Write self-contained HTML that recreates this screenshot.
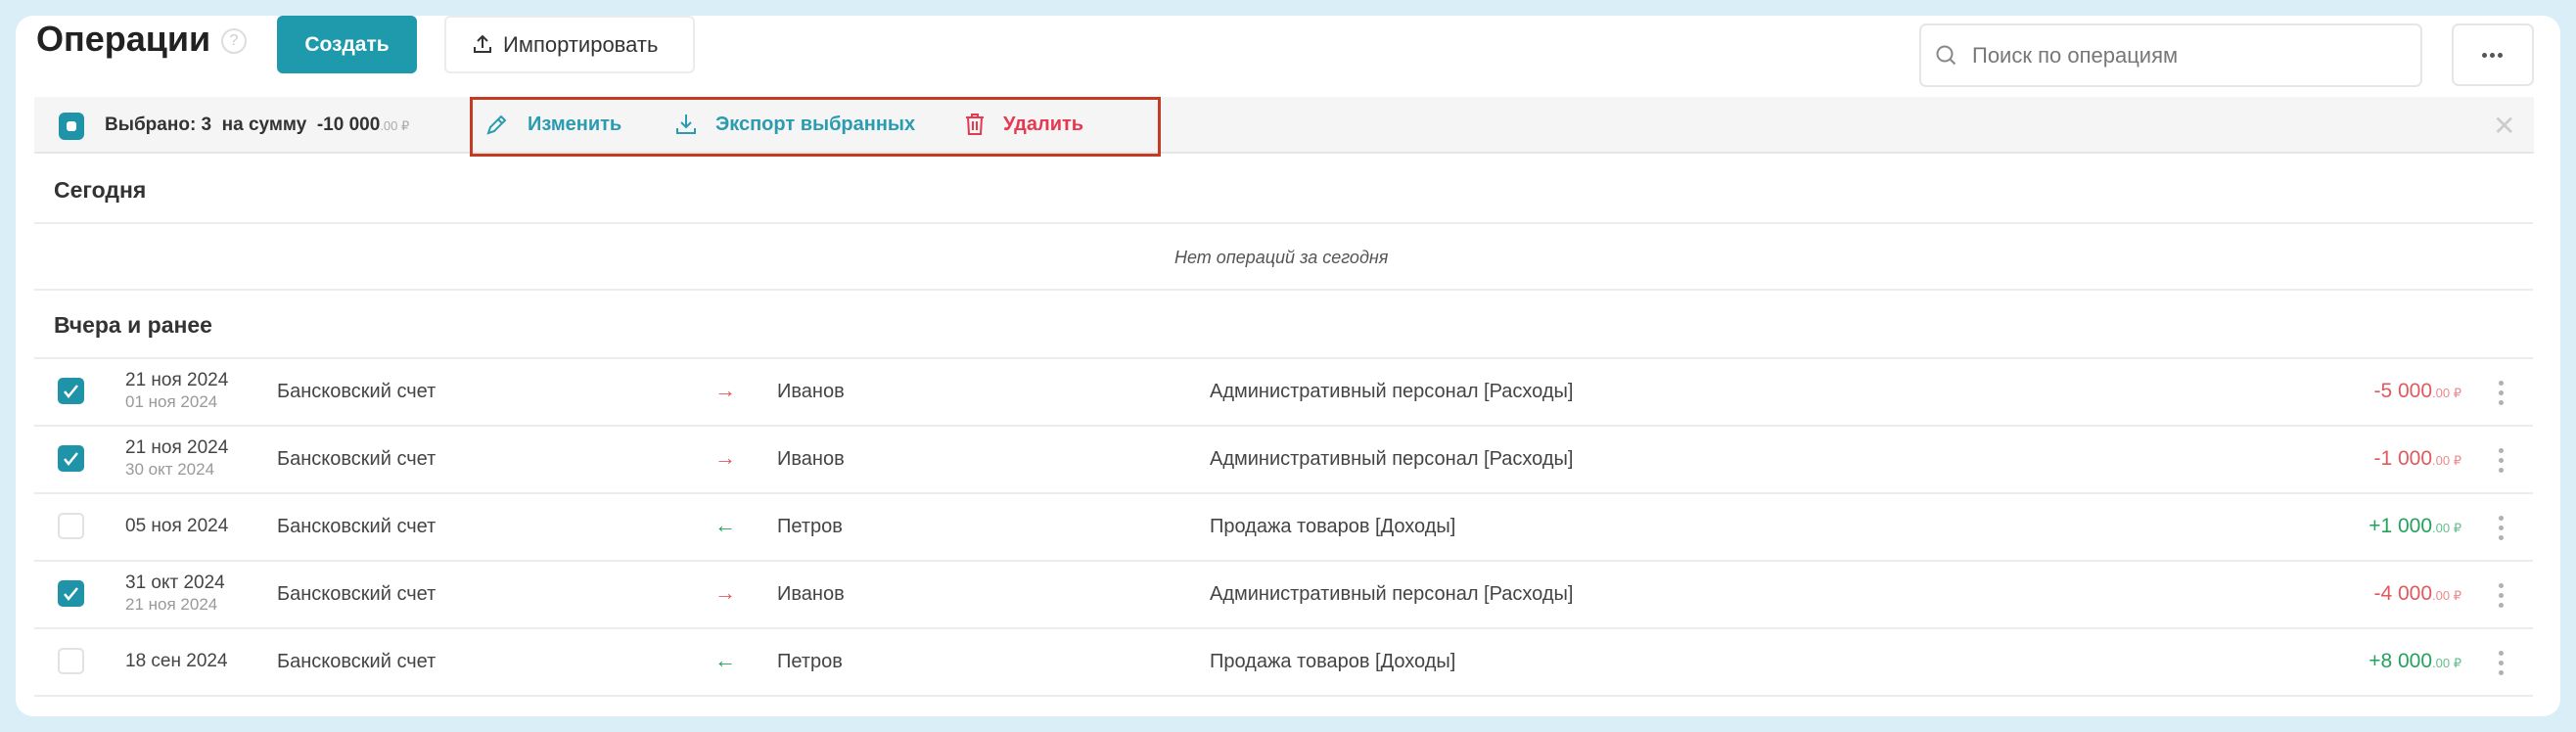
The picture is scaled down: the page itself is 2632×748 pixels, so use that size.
<!DOCTYPE html>
<html><head><meta charset="utf-8"><style>
*{margin:0;padding:0;box-sizing:border-box}
body{width:2632px;height:748px;background:#d9eef6;font-family:"Liberation Sans",sans-serif;position:relative;overflow:hidden;color:#333}
.card{position:absolute;left:16px;top:16px;width:2600px;height:716px;background:#fff;border-radius:18px}
.a{position:absolute;white-space:nowrap}
.line{position:absolute;left:35px;width:2553px;height:2px;background:#ececec}
.cb{position:absolute;left:59px;width:27px;height:27px;border-radius:5px}
.cb.on{background:#1f93a7}
.cb.off{border:2px solid #e2e2e2;background:#fff}
.d1{font-size:19px;color:#444}
.d2{font-size:17px;color:#999}
.t{font-size:20px;color:#444}
.amt{font-size:21px;text-align:right;right:117px}
.amt small{font-size:13px;opacity:.7}
.red{color:#e0595c}.green{color:#23a25e}
.dots{position:absolute;left:2553px;width:6px}
.dots i{display:block;width:5px;height:5px;border-radius:50%;background:#b0b0b0;margin-bottom:5px}
.md{position:absolute;top:54px;width:5px;height:5px;border-radius:50%;background:#555}
</style></head><body>
<div class="card"></div>
<div class="a" style="left:37px;top:19px;font-size:36px;font-weight:bold;color:#222">Операции</div>
<div class="a" style="left:226px;top:29px;width:26px;height:26px;border:2px solid #ddd;border-radius:50%;color:#ccc;font-size:16px;text-align:center;line-height:22px">?</div>
<div class="a" style="left:283px;top:16px;width:143px;height:59px;background:#1f9aad;border-radius:6px;color:#fff;font-weight:bold;font-size:21px;text-align:center;line-height:59px">Создать</div>
<div class="a" style="left:454px;top:16px;width:256px;height:59px;border:2px solid #ececec;border-radius:6px;font-size:22px;line-height:55px;color:#333;padding-left:26px">
<svg width="22" height="22" viewBox="0 0 22 22" style="vertical-align:-3px;margin-right:10px"><path d="M11 15V3M6 8l5-5 5 5M3 14v5h16v-5" fill="none" stroke="#333" stroke-width="2"/></svg>Импортировать</div>
<div class="a" style="left:1961px;top:24px;width:514px;height:65px;border:2px solid #e6e6e6;border-radius:7px"></div>
<svg class="a" style="left:1977px;top:45px" width="24" height="24" viewBox="0 0 24 24"><circle cx="10" cy="10" r="7.5" fill="none" stroke="#888" stroke-width="2"/><path d="M15.5 15.5l5 5" stroke="#888" stroke-width="2"/></svg>
<div class="a" style="left:2015px;top:44px;font-size:22px;color:#777">Поиск по операциям</div>
<div class="a" style="left:2505px;top:24px;width:84px;height:64px;border:2px solid #e6e6e6;border-radius:7px"></div>
<div class="md" style="left:2536px"></div><div class="md" style="left:2544px"></div><div class="md" style="left:2552px"></div>

<div class="a" style="left:35px;top:99px;width:2554px;height:58px;background:#f5f5f5;border-bottom:2px solid #e6e6e6"></div>
<div class="a" style="left:60px;top:115px;width:26px;height:28px;background:#1f93a7;border-radius:6px"><div style="position:absolute;left:8px;top:9px;width:10px;height:10px;background:#fff;border-radius:3px"></div></div>
<div class="a" style="left:107px;top:117px;font-size:19px;font-weight:bold;color:#333">Выбрано: 3 &nbsp;на сумму &nbsp;-10 000<span style="font-size:13px;color:#aaa;font-weight:normal">.00 ₽</span></div>
<div class="a" style="left:480px;top:99px;width:706px;height:61px;border:3px solid #c43a22"></div>
<svg class="a" style="left:495px;top:116px" width="24" height="24" viewBox="0 0 24 24"><path d="M4 20l2-6 11-11 4 4-11 11zM14 6l4 4" fill="none" stroke="#2a9bb0" stroke-width="2"/></svg>
<div class="a" style="left:539px;top:116px;font-size:20px;font-weight:bold;color:#2a9bb0">Изменить</div>
<svg class="a" style="left:688px;top:114px" width="26" height="26" viewBox="0 0 26 26"><path d="M13 3v13M8 11l5 5 5-5M4 17v5h18v-5" fill="none" stroke="#2a9bb0" stroke-width="2"/></svg>
<div class="a" style="left:731px;top:116px;font-size:20px;font-weight:bold;color:#2a9bb0">Экспорт выбранных</div>
<svg class="a" style="left:985px;top:114px" width="22" height="26" viewBox="0 0 22 26"><path d="M2 6h18M8 6V3h6v3M4 6l1 17h12l1-17M9 10v9M13 10v9" fill="none" stroke="#e8384f" stroke-width="2"/></svg>
<div class="a" style="left:1025px;top:116px;font-size:20px;font-weight:bold;color:#e8384f">Удалить</div>
<div class="a" style="left:2547px;top:112px;font-size:28px;color:#ccc">✕</div>

<div class="a" style="left:55px;top:181px;font-size:23px;font-weight:bold;color:#333">Сегодня</div>
<div class="line" style="top:227px"></div>
<div class="a" style="left:1200px;top:253px;font-size:18px;font-style:italic;color:#555">Нет операций за сегодня</div>
<div class="line" style="top:295px"></div>
<div class="a" style="left:55px;top:319px;font-size:23px;font-weight:bold;color:#333">Вчера и ранее</div>
<div class="line" style="top:365px"></div>

<div class="line" style="top:434px"></div>
<div class="line" style="top:503px"></div>
<div class="line" style="top:572px"></div>
<div class="line" style="top:641px"></div>
<div class="line" style="top:710px"></div>

<div class="cb on" style="top:386px"><svg width="27" height="27" viewBox="0 0 27 27"><path d="M7 14l4 5 9-11" fill="none" stroke="#fff" stroke-width="2.5"/></svg></div>
<div class="a d1" style="left:128px;top:378px">21 ноя 2024</div><div class="a d2" style="left:128px;top:401px">01 ноя 2024</div>
<div class="a t" style="left:283px;top:389px">Бансковский счет</div>
<div class="a red" style="left:730px;top:386px;font-size:22px">→</div>
<div class="a t" style="left:794px;top:389px">Иванов</div>
<div class="a t" style="left:1236px;top:389px">Административный персонал [Расходы]</div>
<div class="a amt red" style="top:388px">-5 000<small>.00 ₽</small></div>
<div class="dots" style="top:389px"><i></i><i></i><i></i></div>

<div class="cb on" style="top:455px"><svg width="27" height="27" viewBox="0 0 27 27"><path d="M7 14l4 5 9-11" fill="none" stroke="#fff" stroke-width="2.5"/></svg></div>
<div class="a d1" style="left:128px;top:447px">21 ноя 2024</div><div class="a d2" style="left:128px;top:470px">30 окт 2024</div>
<div class="a t" style="left:283px;top:458px">Бансковский счет</div>
<div class="a red" style="left:730px;top:455px;font-size:22px">→</div>
<div class="a t" style="left:794px;top:458px">Иванов</div>
<div class="a t" style="left:1236px;top:458px">Административный персонал [Расходы]</div>
<div class="a amt red" style="top:457px">-1 000<small>.00 ₽</small></div>
<div class="dots" style="top:458px"><i></i><i></i><i></i></div>

<div class="cb off" style="top:524px"></div>
<div class="a d1" style="left:128px;top:527px">05 ноя 2024</div>
<div class="a t" style="left:283px;top:527px">Бансковский счет</div>
<div class="a green" style="left:730px;top:524px;font-size:22px">←</div>
<div class="a t" style="left:794px;top:527px">Петров</div>
<div class="a t" style="left:1236px;top:527px">Продажа товаров [Доходы]</div>
<div class="a amt green" style="top:526px">+1 000<small>.00 ₽</small></div>
<div class="dots" style="top:527px"><i></i><i></i><i></i></div>

<div class="cb on" style="top:593px"><svg width="27" height="27" viewBox="0 0 27 27"><path d="M7 14l4 5 9-11" fill="none" stroke="#fff" stroke-width="2.5"/></svg></div>
<div class="a d1" style="left:128px;top:585px">31 окт 2024</div><div class="a d2" style="left:128px;top:608px">21 ноя 2024</div>
<div class="a t" style="left:283px;top:596px">Бансковский счет</div>
<div class="a red" style="left:730px;top:593px;font-size:22px">→</div>
<div class="a t" style="left:794px;top:596px">Иванов</div>
<div class="a t" style="left:1236px;top:596px">Административный персонал [Расходы]</div>
<div class="a amt red" style="top:595px">-4 000<small>.00 ₽</small></div>
<div class="dots" style="top:596px"><i></i><i></i><i></i></div>

<div class="cb off" style="top:662px"></div>
<div class="a d1" style="left:128px;top:665px">18 сен 2024</div>
<div class="a t" style="left:283px;top:665px">Бансковский счет</div>
<div class="a green" style="left:730px;top:662px;font-size:22px">←</div>
<div class="a t" style="left:794px;top:665px">Петров</div>
<div class="a t" style="left:1236px;top:665px">Продажа товаров [Доходы]</div>
<div class="a amt green" style="top:664px">+8 000<small>.00 ₽</small></div>
<div class="dots" style="top:665px"><i></i><i></i><i></i></div>
</body></html>
